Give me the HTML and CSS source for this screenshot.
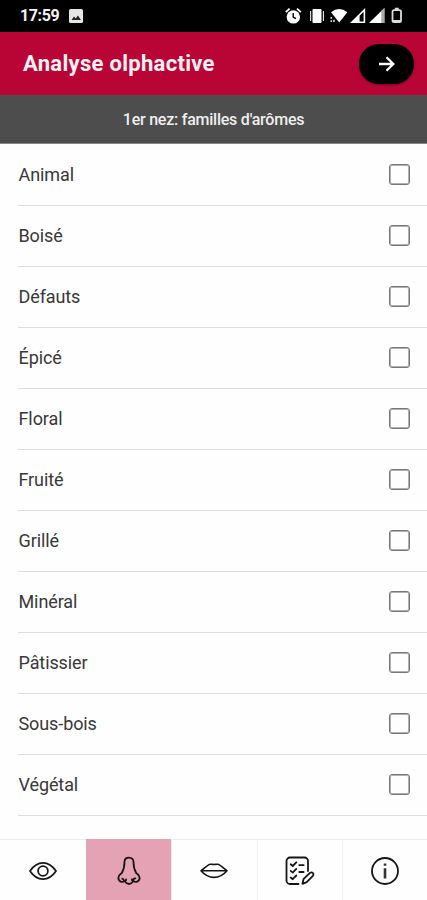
FILE: index.html
```html
<!DOCTYPE html>
<html lang="fr">
<head>
<meta charset="utf-8">
<meta name="viewport" content="width=device-width, initial-scale=1">
<title>Analyse olphactive</title>
<link rel="stylesheet" href="styles.css">
</head>
<body>
<div class="app">
  <div class="status">
    <span class="time">17:59</span>
    <svg class="photo" width="14" height="14" viewBox="0 0 14 14"><rect width="14" height="14" rx="1.6" fill="#e6e6e6"/><path d="M2.5 11 5 7.4l1.700 2 2.200-2.800L12 11z" fill="#222"/></svg>
    <svg class="indicators" width="120" height="18" viewBox="0 0 120 18">
      <g fill="#fff">
        <circle cx="8.300" cy="9.900" r="6.700"/>
        <path d="M.8 5.100 4.600 1.600M12 1.600l3.800 3.500" stroke="#fff" stroke-width="1.800"/>
        <path d="M8.200 6v4l2.800 1.700" fill="none" stroke="#000" stroke-width="1.400"/>
        <rect x="27.500" y="2" width="9" height="14" rx="1"/>
        <path d="M25.600 4v10M38.400 4v10" stroke="#ddd" stroke-width="1.200"/>
        <path d="M46 5.200Q54-1 62.400 5.200L54.200 15.600z"/>
        <path d="M46.300 10v1.800M46.300 13.300v1.800M49 12.800v2.300" stroke="#ddd" stroke-width="1.600"/>
        <path d="M65 16 80.200 1v15z"/>
        <path d="M74.600 8.700 78.600 4.800v9.600h-4z" fill="#000"/>
        <path d="M84 16 99.400 1v15z"/>
        <path d="M96.300 4.100 99.400 1v15h-3.100z" fill="#aaa"/>
      </g>
      <rect x="107.500" y="3.200" width="8.500" height="12" rx="1.600" fill="none" stroke="#ddd" stroke-width="1.800"/>
      <path d="M109.800 1.800h4M108 13.900h7.500" stroke="#ddd" stroke-width="2"/>
    </svg>
  </div>
  <header class="header">
    <h1 class="title">Analyse olphactive</h1>
    <button class="next" aria-label="Suivant">
      <svg width="18" height="18" viewBox="0 0 18 18" fill="none" stroke="#fff" stroke-width="2.300"><path d="M1 9h14M8.500 2.200 15.300 9l-6.800 6.800"/></svg>
    </button>
  </header>
  <div class="step"><span>1er nez: familles d'arômes</span></div>
  <main class="list">
    <label class="row"><span>Animal</span><i class="check"></i></label>
    <label class="row"><span>Boisé</span><i class="check"></i></label>
    <label class="row"><span>Défauts</span><i class="check"></i></label>
    <label class="row"><span>Épicé</span><i class="check"></i></label>
    <label class="row"><span>Floral</span><i class="check"></i></label>
    <label class="row"><span>Fruité</span><i class="check"></i></label>
    <label class="row"><span>Grillé</span><i class="check"></i></label>
    <label class="row"><span>Minéral</span><i class="check"></i></label>
    <label class="row"><span>Pâtissier</span><i class="check"></i></label>
    <label class="row"><span>Sous-bois</span><i class="check"></i></label>
    <label class="row"><span>Végétal</span><i class="check"></i></label>
  </main>
  <nav class="tabs">
    <a class="tab"><svg class="icon" viewBox="0 0 30 30"><path d="M2 15Q7.500 6.800 15 6.800T28 15Q22.500 23.200 15 23.200T2 15z"/><circle cx="15" cy="15" r="4.900"/></svg></a>
    <a class="tab active"><svg class="icon" viewBox="0 0 30 30"><path d="M15 1.600c-3 0-4.500 2-4.500 4.500 0 4.400-.9 8-2.700 10.800-2.900 2-4.100 5-2.700 7.400 1.300 2 3.800 2 5.400.8 1.400 2 2.800 2.900 4.500 2.900s3.100-.9 4.500-2.900c1.600 1.200 4.100 1.200 5.400-.8 1.400-2.400.2-5.400-2.700-7.400-1.800-2.800-2.700-6.400-2.700-10.800 0-2.500-1.500-4.500-4.500-4.500z"/><path d="M10.500 25.100c-.8-1.200-1-2-2.200-2.400M19.500 25.100c-.9-1.500 0-2.700 1.900-2.800M10.600 25c1.200-.1 1.600-.8 1.500-1.700M19.400 25c-1.200-.1-1.600-.8-1.500-1.700"/></svg></a>
    <a class="tab"><svg class="icon lips" viewBox="0 0 30 30"><path d="M2 14.800C5 13 8 8.700 11.500 8.300c1.300-.1 2.300.2 3.500.2s2.200-.3 3.500-.2C22 8.700 25 13 28 14.800c-4 4.700-8 6.600-13 6.600S6 19.500 2 14.800zM2.500 14.700h25"/></svg></a>
    <a class="tab"><svg class="icon" viewBox="0 0 30 30"><path d="M13.500 28H5a3.500 3.500 0 0 1-3.500-3.500V5A3.500 3.500 0 0 1 5 1.500h14.500A3.500 3.500 0 0 1 23 5v10"/><path d="m5.700 8.300 2 1.700 3.600-3.700M5.700 14.900l2 1.700 3.600-3.700M5.700 21.500l2 1.700 3.600-3.700M14.300 9.200h4.300M14.300 16h4.300"/><path d="m17.500 27.800 1-4.700 6.400-6.200c2.300-1.600 4.400.7 3 2.900l-6.200 6.400z"/></svg></a>
    <a class="tab"><svg class="icon" viewBox="0 0 30 30"><circle cx="15" cy="15" r="13"/><path class="stem" d="M15 12.300v10.200M15 7.500v2.300"/></svg></a>
  </nav>
</div>
</body>
</html>
```
FILE: styles.css
```css
* { box-sizing: border-box; }
body {
  margin: 0;
  background: #fefefe;
  color: #383838;
  font-family: Roboto, "Liberation Sans", sans-serif;
}
.app {
  display: flex;
  flex-direction: column;
  height: 900px;
  overflow: hidden;
}
.status {
  display: flex;
  align-items: center;
  flex: none;
  height: 32px;
  padding: 0 22px 0 20px;
  background: #000;
}
.time {
  width: 49px;
  color: #f2f2f2;
  font-size: 16px;
  font-weight: 700;
  line-height: 32px;
  letter-spacing: -.4px;
}
.indicators { margin-left: auto; }
.header {
  display: flex;
  align-items: center;
  justify-content: space-between;
  flex: none;
  height: 63px;
  padding: 0 13px 0 23px;
  background: #b90536;
}
.title {
  margin: 0;
  color: #fdf1f4;
  font-size: 22px;
  font-weight: 700;
  line-height: 62px;
  letter-spacing: .3px;
}
.next {
  display: flex;
  align-items: center;
  justify-content: center;
  width: 55px;
  height: 40px;
  margin-top: 1px;
  padding: 0;
  border: 0;
  border-radius: 20px;
  background: #000;
  box-shadow: 0 1px 2px #0006;
}
.step {
  flex: none;
  height: 49px;
  background: #4d4d4d;
  border-bottom: 1px solid #858585;
  color: #efefef;
  font-size: 16px;
  font-weight: 500;
  line-height: 49px;
  letter-spacing: -.23px;
  text-align: center;
}
.list {
  flex: 1;
  padding: 1px 0 0 18px;
}
.row {
  display: flex;
  align-items: center;
  justify-content: space-between;
  height: 61px;
  padding: 0 17px 1px .5px;
  border-bottom: 1px solid #dedede;
  font-size: 18px;
  letter-spacing: -.1px;
}
.check {
  width: 21px;
  height: 21px;
  border: 1px solid #777;
  border-radius: 3px;
  box-shadow: inset 0 0 0 1px #b0b0b0;
}
.tabs {
  display: grid;
  grid-template-columns: 86px 85px 86px 85px 85px;
  flex: none;
  height: 61px;
  border-top: 1px solid #ececec;
}
.tab {
  display: flex;
  align-items: center;
  justify-content: center;
  padding: 1px 1px 0 0;
  border-left: 1px solid #f0f0f0;
}
.tab:first-child { border-left: 0; }
.tab:last-child { padding-right: 0; }
.active {
  margin-top: -1px;
  padding-top: 2px;
  border-color: #e5a2b5;
  background: #e5a2b5;
}
.icon {
  width: 30px;
  height: 30px;
  fill: none;
  stroke: #161616;
  stroke-width: 1.8;
  stroke-linecap: round;
  stroke-linejoin: round;
}
.lips { stroke-width: 1.6; }
.stem {
  stroke: #333;
  stroke-width: 2.6;
  stroke-linecap: butt;
}
```
